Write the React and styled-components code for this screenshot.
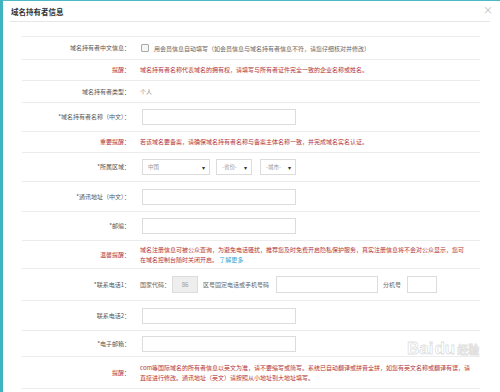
import styled, { createGlobalStyle } from 'styled-components';

const GlobalStyle = createGlobalStyle`
  body {
    margin: 0;
    background: #fff;
    font-family: "Noto Sans CJK SC", "Liberation Sans", sans-serif;
  }
`;

// 각 행 높이 (하단 border 포함)
const rows = [23, 21, 22, 29, 21, 29, 30, 29, 28, 32, 30, 26, 32];

const App = () => {
  return (
    <S.Panel>
      <GlobalStyle />
      <S.Header>
        <S.Title>域名持有者信息</S.Title>
      </S.Header>
      <S.Close>×</S.Close>

      <S.Form>
        <S.Row $h={rows[0]}>
          <S.Label>域名持有者中文信息：</S.Label>
          <S.Field>
            <S.Check />
            <S.Text>用会员信息自动填写（如会员信息与域名持有者信息不符，请您仔细核对并修改）</S.Text>
          </S.Field>
        </S.Row>
        <S.Row $h={rows[1]}>
          <S.Label $red>提醒：</S.Label>
          <S.Tip>域名持有者名称代表域名的拥有权，请填写与所有者证件完全一致的企业名称或姓名。</S.Tip>
        </S.Row>
        <S.Row $h={rows[2]}>
          <S.Label>域名持有者类型：</S.Label>
          <S.Value>个人</S.Value>
        </S.Row>
        <S.Row $h={rows[3]}>
          <S.Label>*域名持有者名称（中文）：</S.Label>
          <S.Field>
            <S.Input />
          </S.Field>
        </S.Row>
        <S.Row $h={rows[4]}>
          <S.Label $red>重要提醒：</S.Label>
          <S.Tip>若该域名要备案，请确保域名持有者名称与备案主体名称一致，并完成域名实名认证。</S.Tip>
        </S.Row>
        <S.Row $h={rows[5]}>
          <S.Label>*所属区域：</S.Label>
          <S.Field>
            <S.Select $w={68}>
              <span>中国</span>
              <S.Caret>▾</S.Caret>
            </S.Select>
            <S.Select $w={36} $ml={6}>
              <span>-省份-</span>
              <S.Caret>▾</S.Caret>
            </S.Select>
            <S.Select $w={36} $ml={8}>
              <span>-城市-</span>
              <S.Caret>▾</S.Caret>
            </S.Select>
          </S.Field>
        </S.Row>
        <S.Row $h={rows[6]}>
          <S.Label>*通讯地址（中文）：</S.Label>
          <S.Field>
            <S.Input />
          </S.Field>
        </S.Row>
        <S.Row $h={rows[7]}>
          <S.Label>*邮编：</S.Label>
          <S.Field>
            <S.Input />
          </S.Field>
        </S.Row>
        <S.Row $h={rows[8]}>
          <S.Label $red>温馨提醒：</S.Label>
          <S.Tip>
            域名注册信息可被公众查询，为避免电话骚扰，推荐您及时免费开启隐私保护服务，真实注册信息将不会对公众显示，您可
            <br />
            在域名控制台随时关闭开启。 <S.Link>了解更多</S.Link>
          </S.Tip>
        </S.Row>
        <S.Row $h={rows[9]}>
          <S.Label>*联系电话1：</S.Label>
          <S.Field>
            <S.Text>国家代码：</S.Text>
            <S.Input $w={26} $ml={2} $h={17} $disabled>86</S.Input>
            <S.Text $ml={5}>区号固定电话或手机号码</S.Text>
            <S.Input $w={102} $ml={7} $h={17} />
            <S.Text $ml={5}>分机号</S.Text>
            <S.Input $w={30} $ml={6} $h={17} />
          </S.Field>
        </S.Row>
        <S.Row $h={rows[10]}>
          <S.Label>联系电话2：</S.Label>
          <S.Field>
            <S.Input />
          </S.Field>
        </S.Row>
        <S.Row $h={rows[11]}>
          <S.Label>*电子邮箱：</S.Label>
          <S.Field>
            <S.Input />
          </S.Field>
        </S.Row>
        <S.Row $h={rows[12]}>
          <S.Label $red>提醒：</S.Label>
          <S.Tip>
            com等国际域名的所有者信息以英文为准，请不要缩写或简写。系统已自动翻译或拼音全拼，如您有英文名称或翻译有误，请
            <br />
            直接进行修改。通讯地址（英文）请按照从小地址到大地址填写。
          </S.Tip>
        </S.Row>
      </S.Form>

      <S.Watermark>
        Bai<S.Paw>du</S.Paw>
        <S.WmCn>经验</S.WmCn>
      </S.Watermark>
    </S.Panel>
  );
};

const S = {
  Panel: styled.div`
    position: relative;
    width: 500px;
    height: 392px;
    box-sizing: border-box;
    border-top: 1px solid #4cb9c4;
    border-left: 3px solid #3fb3bf;
    background: #fff;
    overflow: hidden;
  `,
  Header: styled.div`
    display: flex;
    align-items: center;
    height: 20px;
    margin: 0 10px 0 7px;
    border-bottom: 1px solid #e6e6e6;
  `,
  Title: styled.h2`
    margin: 0 0 0 1px;
    font-size: 7.5px;
    font-weight: bold;
    color: #333;
  `,
  Close: styled.span`
    position: absolute;
    top: 1px;
    right: 7px;
    font-size: 10px;
    color: #bbb;
  `,
  Form: styled.div`
    margin: 14px 0 0 19px;
    width: 458px;
    border-top: 1px solid #ececec;
  `,
  Row: styled.div`
    display: grid;
    grid-template-columns: 108px 1fr;
    column-gap: 10px;
    align-items: center;
    height: ${(p) => p.$h}px;
    box-sizing: border-box;
    border-bottom: 1px solid #ececec;
  `,
  Label: styled.div`
    text-align: right;
    font-size: 6px;
    line-height: 10px;
    white-space: nowrap;
    color: ${(p) => (p.$red ? '#b2343a' : '#555')};
  `,
  Field: styled.div`
    display: flex;
    align-items: center;
    min-width: 0;
  `,
  Text: styled.span`
    font-size: 6px;
    color: #666;
    white-space: nowrap;
    margin-left: ${(p) => p.$ml || 0}px;
  `,
  Value: styled.span`
    font-size: 6px;
    color: #888;
  `,
  Tip: styled.div`
    font-size: 6px;
    line-height: 10px;
    color: #b2343a;
    white-space: nowrap;
  `,
  Link: styled.span`
    color: #3aa3cc;
  `,
  Check: styled.span`
    width: 6px;
    height: 6px;
    margin: 0 5px 0 1px;
    border: 1px solid #aaa;
    border-radius: 1px;
    background: #f6f6f6;
  `,
  Input: styled.div`
    display: flex;
    align-items: center;
    justify-content: center;
    box-sizing: border-box;
    width: ${(p) => p.$w || 154}px;
    height: ${(p) => p.$h || 16}px;
    margin-left: ${(p) => p.$ml || 2}px;
    border: 1px solid #dcdcdc;
    background: ${(p) => (p.$disabled ? '#eee' : '#fff')};
    font-size: 6px;
    color: #999;
  `,
  Select: styled.div`
    display: flex;
    align-items: center;
    justify-content: space-between;
    box-sizing: border-box;
    width: ${(p) => p.$w}px;
    height: 16px;
    margin-left: ${(p) => p.$ml || 2}px;
    padding: 0 4px 0 5px;
    border: 1px solid #dcdcdc;
    font-size: 5.5px;
    color: #999;
  `,
  Caret: styled.span`
    font-size: 6px;
    color: #333;
  `,
  Watermark: styled.div`
    position: absolute;
    left: 404px;
    top: 338px;
    display: flex;
    align-items: baseline;
    font-family: "Liberation Sans", sans-serif;
    font-size: 17px;
    font-weight: bold;
    color: rgba(255, 255, 255, 0.5);
    -webkit-text-stroke: 0.8px rgba(180, 180, 180, 0.45);
    pointer-events: none;
  `,
  Paw: styled.span`
    margin-left: 1px;
  `,
  WmCn: styled.span`
    margin-left: 2px;
    font-family: "Noto Sans CJK SC", sans-serif;
    font-size: 11px;
  `,
};

export default App;
